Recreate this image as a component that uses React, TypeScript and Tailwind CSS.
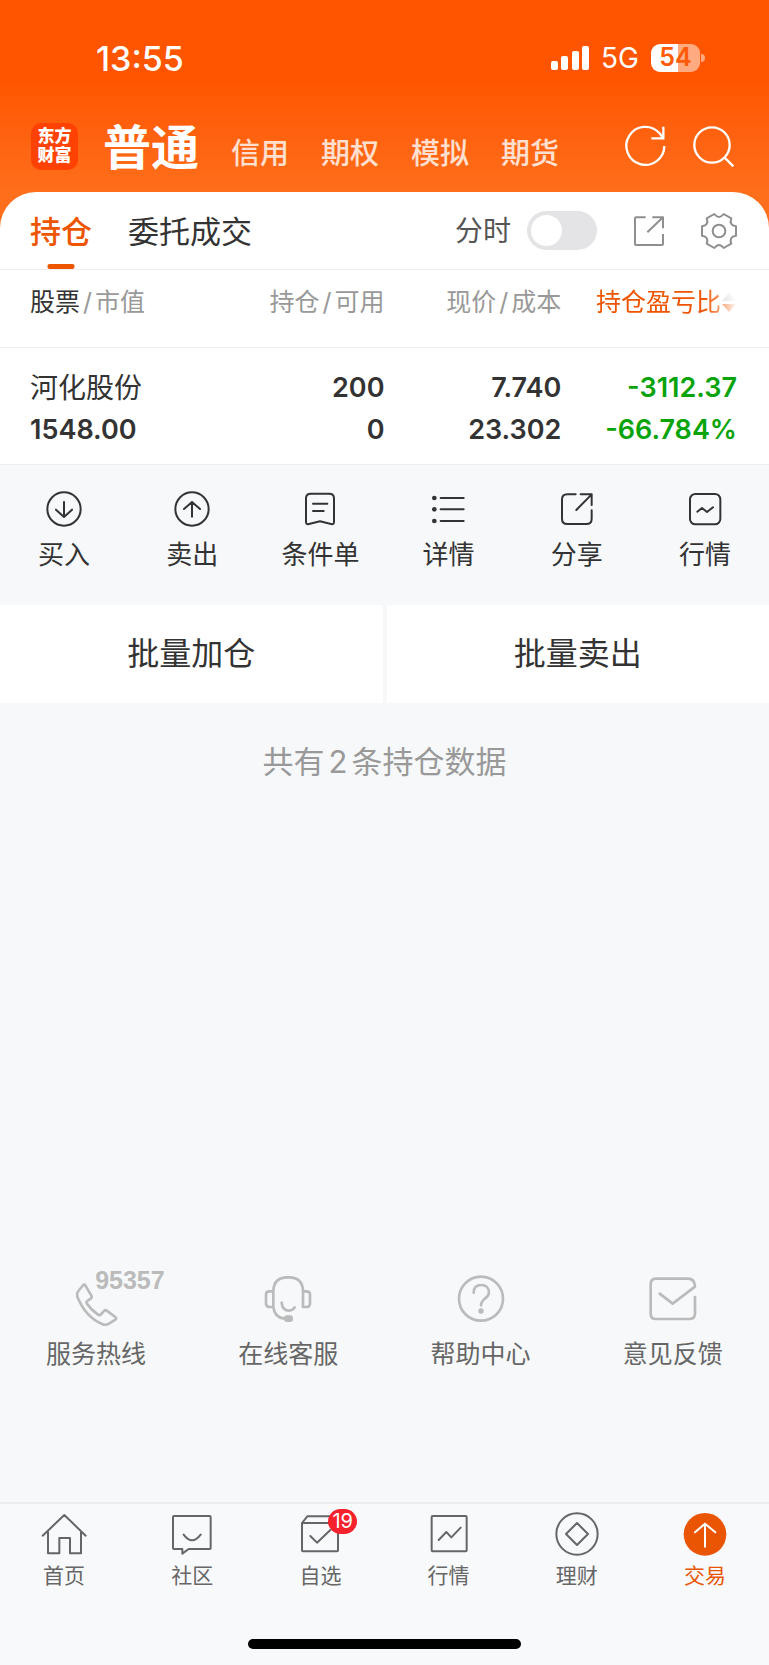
import type { ReactNode } from "react";

type IconProps = { size: string; box: number; width?: number; className?: string; children: ReactNode };

function Icon({ size, box, width = 6, className = "", children }: IconProps) {
  return (
    <svg
      className={`${size} shrink-0 overflow-visible ${className}`}
      viewBox={`0 0 ${box} ${box}`}
      fill="none"
      stroke="currentColor"
      strokeWidth={width}
      strokeLinecap="round"
      strokeLinejoin="round"
      aria-hidden="true"
    >
      {children}
    </svg>
  );
}

const accounts = ["信用", "期权", "模拟", "期货"];

const actions: { label: string; icon: ReactNode }[] = [
  {
    label: "买入",
    icon: (
      <>
        <circle cx="54" cy="54" r="50" />
        <path d="M54 33V77M30 56L54 78L78 56" />
      </>
    ),
  },
  {
    label: "卖出",
    icon: (
      <>
        <circle cx="54" cy="54" r="50" />
        <path d="M54 77V33M30 54L54 33L78 54" />
      </>
    ),
  },
  {
    label: "条件单",
    icon: (
      <path d="M12 22Q12 8 26 8H82Q96 8 96 22V93Q96 101 87 99L54 91L21 99Q12 101 12 93ZM33 38H76M33 60H65" />
    ),
  },
  {
    label: "详情",
    icon: (
      <>
        <path d="M29 21H98M29 55H98M29 90H98" />
        <g fill="currentColor" stroke="none">
          <circle cx="10" cy="21" r="7" />
          <circle cx="10" cy="55" r="7" />
          <circle cx="10" cy="90" r="7" />
        </g>
      </>
    ),
  },
  {
    label: "分享",
    icon: <path d="M50 10H25Q9 10 9 26V83Q9 99 25 99H82Q98 99 98 83V58M65 10H98V42M98 10L52 57" />,
  },
  {
    label: "行情",
    icon: (
      <>
        <rect x="9" y="9" width="91" height="91" rx="16" />
        <path d="M31 62L45 51L60 63L78 49" />
      </>
    ),
  },
];

const services: { label: string; tag?: string; icon: ReactNode }[] = [
  {
    label: "服务热线",
    tag: "95357",
    icon: (
      <path d="M37 33L22 51Q15 60 21 73C36 108 62 137 93 150Q104 155 114 149L133 137Q138 133 133 129L107 110Q103 107 99 111L88 123Q84 124 80 121C66 112 55 100 47 88Q45 84 49 81L60 73Q64 69 61 65L43 34Q40 30 37 33Z" />
    ),
  },
  {
    label: "在线客服",
    icon: (
      <>
        <path d="M31 99V50Q33 10 73 10H78Q118 10 120 50V99M31 52H19Q9 52 9 62V88Q9 99 19 99H31M120 52H131Q141 52 141 62V88Q141 99 131 99H120M31 99Q34 130 64 134M56 86Q58 109 76 110Q89 110 95 100" />
        <rect x="63" y="124" width="27" height="20" rx="9" fill="currentColor" stroke="none" />
      </>
    ),
  },
  {
    label: "帮助中心",
    icon: (
      <>
        <circle cx="75" cy="74" r="66" />
        <path d="M53 56C53 41 62 33 76 33C90 33 99 42 99 56C99 72 75 74 75 94" />
        <circle cx="75" cy="111" r="8" fill="currentColor" stroke="none" />
      </>
    ),
  },
  {
    label: "意见反馈",
    icon: (
      <path d="M141 69V118Q141 135 125 135H24Q8 135 8 119V31Q8 14 24 14H120Q140 14 141 38L74 89L35 59" />
    ),
  },
];

const tabs: { label: string; badge?: string; icon: ReactNode; active?: boolean }[] = [
  {
    label: "首页",
    icon: <path d="M2 71L67 9L131 71M18 60V124H52V78H84V124H117V60" />,
  },
  {
    label: "社区",
    icon: <path d="M12 12H119Q122 12 122 15V108Q122 111 119 111H56L37 125V111H12Q9 111 9 108V15Q9 12 12 12ZM41 68Q66 102 92 68" />,
  },
  {
    label: "自选",
    badge: "19",
    icon: <path d="M12 33L28 13H120V115Q120 118 117 118H15Q12 118 12 115V33H120M37 72L57 92L97 54" />,
  },
  {
    label: "行情",
    icon: (
      <>
        <rect x="14" y="12" width="105" height="106" rx="3" />
        <path d="M35 84L58 60L73 76L101 47" />
      </>
    ),
  },
  {
    label: "理财",
    icon: (
      <>
        <circle cx="66" cy="66" r="62" />
        <path d="M66 33L99 66L66 99L33 66Z" />
      </>
    ),
  },
  {
    label: "交易",
    active: true,
    icon: (
      <>
        <circle cx="66" cy="67" r="64" fill="currentColor" stroke="none" />
        <path stroke="#fff" d="M66 104V35M36 61L66 35L97 61" />
      </>
    ),
  },
];

function StatusBar() {
  return (
    <div className="flex h-10 items-center justify-between pr-16 pl-24">
      <span className="text-[34px] font-medium">13:55</span>
      <div className="flex items-center gap-3">
        <svg className="h-6 w-[38px]" viewBox="0 0 38 24" fill="currentColor" aria-hidden="true">
          <rect x="0" y="15" width="7" height="9" rx="2" />
          <rect x="10" y="10" width="7" height="14" rx="2" />
          <rect x="21" y="5" width="7" height="19" rx="2" />
          <rect x="31" y="0" width="7" height="24" rx="2" />
        </svg>
        <span className="text-[28px]">5G</span>
        <div className="flex items-center gap-px">
          <span className="flex h-7 w-[49px] items-center justify-center rounded-[9px] bg-linear-to-r from-white from-55% to-white/50 to-55% text-[25px] font-semibold text-[#ff5a08]">
            54
          </span>
          <span className="h-2 w-1 rounded-r-full bg-white/50" />
        </div>
      </div>
    </div>
  );
}

function AccountBar() {
  return (
    <div className="flex items-center justify-between pr-[35px] pl-[31px] text-white">
      <div className="flex items-center gap-[25px]">
        <div className="grid size-[47px] place-content-center rounded-[10px] bg-[#ff4203] text-center text-[17px] leading-[19px] font-black">
          <span>东方</span>
          <span>财富</span>
        </div>
        <nav className="flex items-end gap-8 pt-1">
          <a href="#normal" className="text-5xl leading-[56px] font-bold">
            普通
          </a>
          {accounts.map((name) => (
            <a key={name} href="#account" className="text-[29px] leading-[44px] font-medium text-white/80">
              {name}
            </a>
          ))}
        </nav>
      </div>
      <div className="flex items-center gap-[26px]">
        <button type="button" aria-label="刷新">
          <Icon size="size-[42px]" box={126} width={7}>
            <path strokeLinecap="butt" strokeLinejoin="miter" d="M121 63A57 57 0 1 1 106 24L117 38M118 5V40H82" />
          </Icon>
        </button>
        <button type="button" aria-label="搜索">
          <Icon size="size-[42px]" box={126} width={7}>
            <circle cx="60" cy="60" r="53" />
            <path strokeLinecap="butt" d="M98 98L124 124" />
          </Icon>
        </button>
      </div>
    </div>
  );
}

function ViewBar() {
  return (
    <div className="flex h-[78px] items-center justify-between rounded-t-[36px] border-b border-[#eeeeee] bg-white pr-8 pl-[30px]">
      <div className="flex h-full gap-9 text-[31px]">
        <button type="button" className="relative pt-[3px] font-medium text-[#ee5500]">
          持仓
          <span className="absolute bottom-0 left-1/2 h-[5px] w-[27px] -translate-x-1/2 rounded-[2px] bg-[#ee5500]" />
        </button>
        <button type="button" className="pt-[3px]">
          委托成交
        </button>
      </div>
      <div className="flex items-center gap-[34px] text-[#8f8f8f]">
        <label className="flex items-center gap-4 text-[28px] text-[#555555]">
          分时
          <input
            type="checkbox"
            role="switch"
            className="h-[39px] w-[70px] appearance-none rounded-full bg-[#e4e4e7] p-1 before:block before:size-[31px] before:rounded-full before:bg-white checked:bg-[#ee5500] checked:before:translate-x-[31px]"
          />
        </label>
        <button type="button" aria-label="分享">
          <Icon size="size-9" box={108}>
            <path strokeLinecap="butt" d="M44 13H15Q12 13 12 16V93Q12 96 15 96H93Q96 96 96 93V63M64 13H96V46M96 13L49 58" />
          </Icon>
        </button>
        <button type="button" aria-label="设置">
          <Icon size="size-9" box={108}>
            <circle cx="54" cy="54" r="19" />
            <path d="M105 40V68Q83 71 91 92L68 105Q54 87 40 105L17 92Q25 71 3 68V40Q25 37 17 16L40 3Q54 21 68 3L91 16Q83 37 105 40Z" />
          </Icon>
        </button>
      </div>
    </div>
  );
}

function Slash() {
  return <span className="mx-[3px]">/</span>;
}

function Holdings() {
  return (
    <table className="w-full table-fixed bg-white text-right">
      <colgroup>
        <col className="w-[27%]" />
        <col className="w-[23%]" />
        <col className="w-[23%]" />
        <col className="w-[27%]" />
      </colgroup>
      <thead className="text-[25px] leading-8 text-[#999999]">
        <tr className="border-b border-[#eeeeee]">
          <th className="pt-4 pb-[29px] pl-[30px] text-left font-normal">
            <span className="text-[#333333]">股票</span>
            <Slash />
            市值
          </th>
          <th className="pt-4 pb-[29px] font-normal">
            持仓
            <Slash />
            可用
          </th>
          <th className="pt-4 pb-[29px] font-normal">
            现价
            <Slash />
            成本
          </th>
          <th className="pt-4 pr-8 pb-[29px] font-normal">
            <button
              type="button"
              className="inline-flex items-center text-[#ee5500] [mask-image:linear-gradient(to_left,transparent,rgba(0,0,0,0.55)_16px,black_32px)]"
            >
              持仓盈亏比
              <svg className="h-5 w-4" viewBox="0 0 16 20" aria-hidden="true">
                <path d="M1 9L8 1L15 9Z" fill="#cccccc" />
                <path d="M1 12L8 20L15 12Z" fill="#ee5500" />
              </svg>
            </button>
          </th>
        </tr>
      </thead>
      <tbody className="text-[27px] leading-[42px] font-semibold">
        <tr className="border-b border-[#eeeeee]">
          <td className="pt-[19px] pb-[13px] pl-[30px] text-left">
            <div className="text-[28px] font-normal">河化股份</div>
            <div>1548.00</div>
          </td>
          <td className="pt-[19px] pb-[13px]">
            <div>200</div>
            <div>0</div>
          </td>
          <td className="pt-[19px] pb-[13px]">
            <div>7.740</div>
            <div>23.302</div>
          </td>
          <td className="pt-[19px] pr-8 pb-[13px] text-[#09a30a]">
            <div>-3112.37</div>
            <div>-66.784%</div>
          </td>
        </tr>
      </tbody>
    </table>
  );
}

export default function App() {
  return (
    <div className="flex min-h-screen flex-col bg-[#f7f8fa] font-[Inter,'Noto_Sans_CJK_SC',sans-serif] text-[#333333]">
      <header className="bg-linear-to-b from-[#ff5500] from-[80px] to-[#ff6e1a] to-[192px] pt-[38px] text-white">
        <StatusBar />
        <div className="pt-[38px] pb-4">
          <AccountBar />
        </div>
        <div className="text-[#333333]">
          <ViewBar />
        </div>
      </header>

      <main className="flex grow flex-col">
        <Holdings />

        <div className="grid grid-cols-6 pt-[26px] pb-[30px]">
          {actions.map((a) => (
            <button key={a.label} type="button" className="flex flex-col items-center gap-2 text-[26px] leading-10">
              <Icon size="size-9" box={108}>
                {a.icon}
              </Icon>
              {a.label}
            </button>
          ))}
        </div>

        <div className="grid grid-cols-2 gap-1 text-[32px] leading-[50px]">
          <button type="button" className="bg-white py-6">
            批量加仓
          </button>
          <button type="button" className="bg-white py-6">
            批量卖出
          </button>
        </div>

        <p className="pt-9 text-center text-[31px] leading-[46px] text-[#999999]">
          共有<span className="mx-1">2</span>条持仓数据
        </p>

        <div className="mt-auto grid grid-cols-4 pb-[130px]">
          {services.map((s) => (
            <a key={s.label} href="#service" className="flex flex-col items-center gap-3 text-[25px] leading-9 text-[#666666]">
              <span className="relative text-[#bbbbbb]">
                <Icon size="size-[50px]" box={150} width={8}>
                  {s.icon}
                </Icon>
                {s.tag && (
                  <span className="absolute -top-1 left-6 font-['Liberation_Sans',sans-serif] leading-5 font-bold">
                    {s.tag}
                  </span>
                )}
              </span>
              {s.label}
            </a>
          ))}
        </div>
      </main>

      <footer className="border-t-2 border-[#ebecee] bg-[#f8f9fb] pt-2 pb-4">
        <nav className="grid grid-cols-6">
          {tabs.map((t) => (
            <a
              key={t.label}
              href="#tab"
              className={`flex flex-col items-center gap-1 text-[21px] leading-8 ${t.active ? "text-[#ea5504]" : "text-[#666666]"}`}
            >
              <span className="relative">
                <Icon size="size-11" box={132}>
                  {t.icon}
                </Icon>
                {t.badge && (
                  <span className="absolute -top-[3px] left-[30px] rounded-full bg-[#f5222d] px-1 text-[20px] leading-[25px] text-white">
                    {t.badge}
                  </span>
                )}
              </span>
              {t.label}
            </a>
          ))}
        </nav>
        <div className="mx-auto mt-[47px] h-[10px] w-[273px] rounded-full bg-black" />
      </footer>
    </div>
  );
}
